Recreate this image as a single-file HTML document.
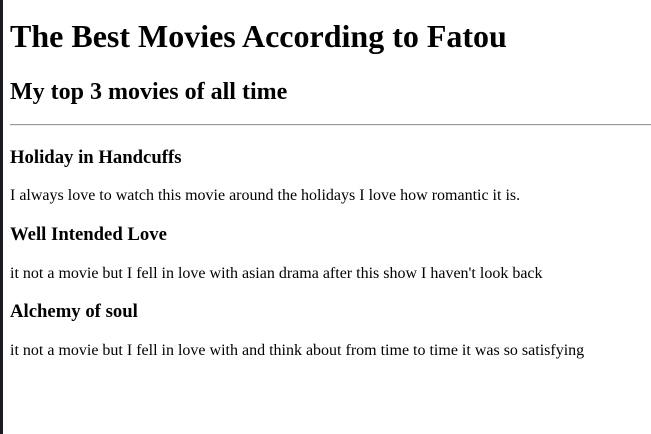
<!DOCTYPE html>
<html><head><style>
body{margin:0 0 8px 10px;font-family:"Liberation Serif",serif;font-size:16px;color:#000;background:#fff;}
.bar{position:fixed;left:0;top:0;width:3px;height:434px;background:#1c1b22;}
h1{margin-top:17.5px;margin-bottom:24.44px;}
h2{margin-bottom:17.9px;}
hr{border:none;border-top:1px solid #999;border-bottom:1px solid #eee;margin:8px 0 10px;}
hr+h3{margin-top:20.7px;}
</style></head><body>
<div class="bar"></div>
<h1>The Best Movies According to Fatou</h1>
<h2>My top 3 movies of all time</h2>
<hr>
<h3>Holiday in Handcuffs</h3>
<p>I always love to watch this movie around the holidays I love how romantic it is.</p>
<h3>Well Intended Love</h3>
<p>it not a movie but I fell in love with asian drama after this show I haven't look back</p>
<h3>Alchemy of soul</h3>
<p>it not a movie but I fell in love with and think about from time to time it was so satisfying</p>
</body></html>
